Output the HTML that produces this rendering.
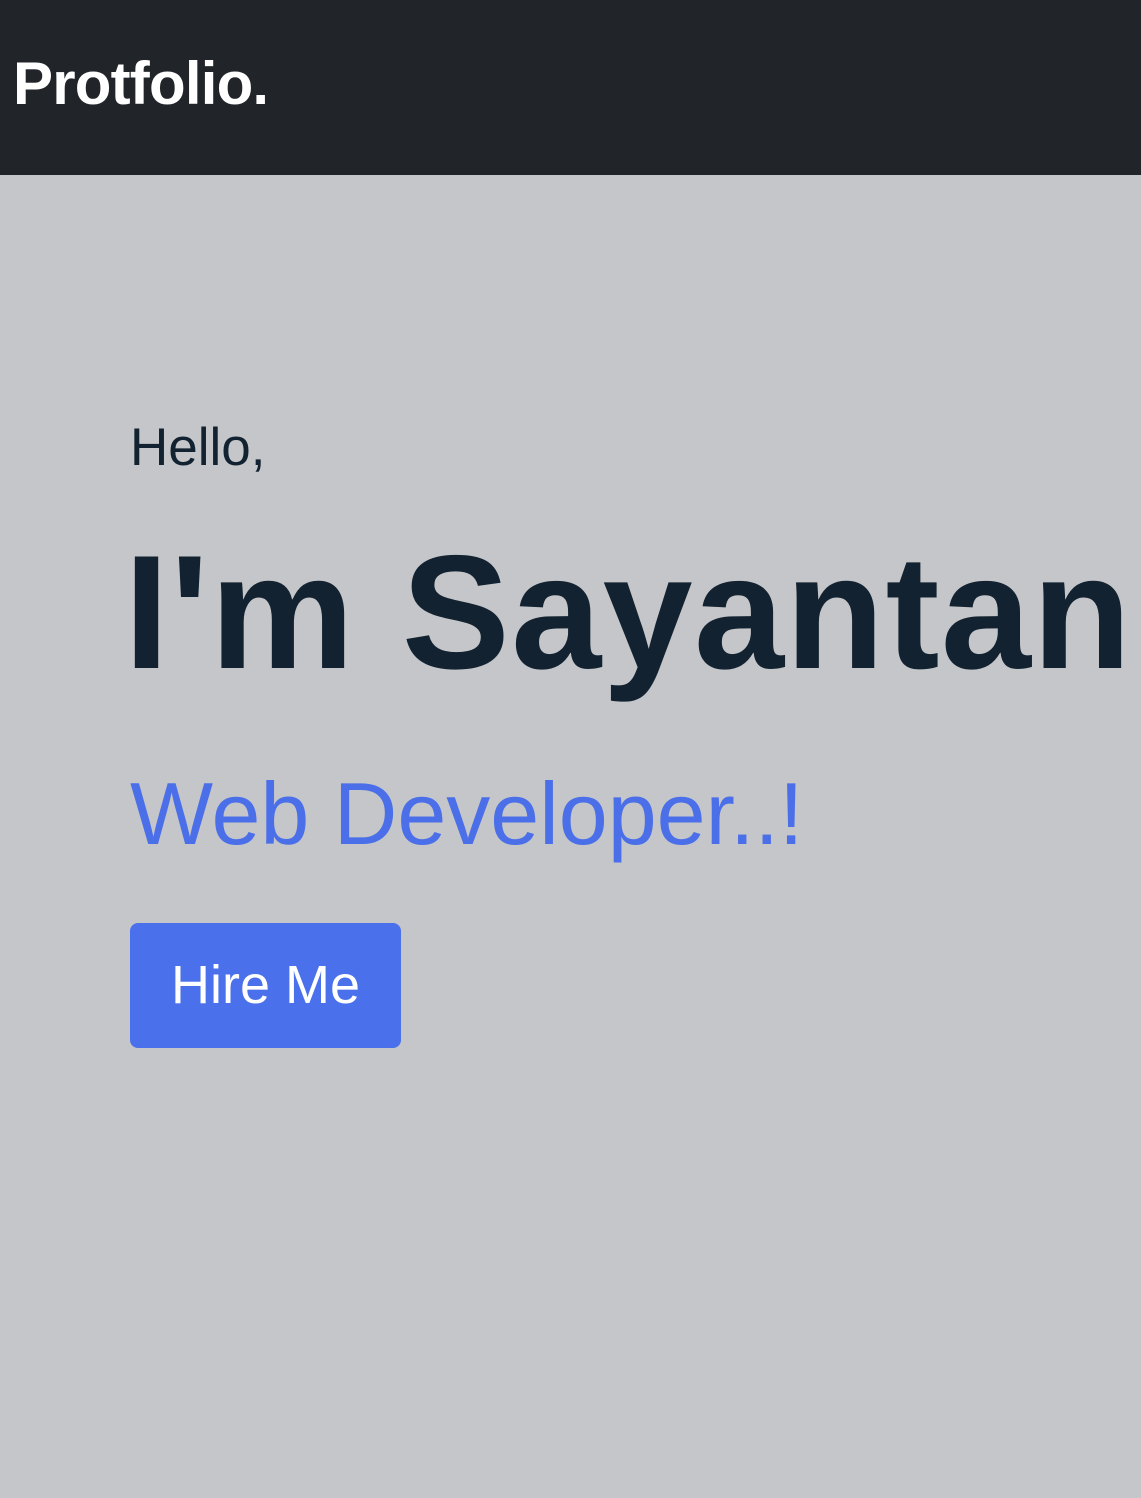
<!DOCTYPE html>
<html><head><meta charset="utf-8"><style>
html,body{margin:0;padding:0;}
body{width:1141px;height:1498px;background:#c5c6ca;font-family:"Liberation Sans",Arial,sans-serif;position:relative;overflow:hidden;}
.nav{position:absolute;left:0;top:0;width:1141px;height:175px;background:#212429;}
.logo{position:absolute;left:13px;top:50px;font-size:60px;font-weight:bold;color:#fff;line-height:68px;letter-spacing:-0.8px;}
.hello{position:absolute;left:130px;top:418px;font-size:53px;line-height:60px;color:#132230;}
.name{position:absolute;left:124px;top:518px;font-size:162px;font-weight:bold;line-height:190px;color:#132230;white-space:nowrap;letter-spacing:1.3px;}
.role{position:absolute;left:130px;top:759px;font-size:88px;line-height:110px;color:#4b6fe8;white-space:nowrap;}
.btn{position:absolute;left:130px;top:923px;width:271px;height:125px;background:#4a70ec;border-radius:8px;color:#fff;font-size:54px;line-height:125px;text-align:center;}
</style></head><body>
<div class="nav"><div class="logo">Protfolio.</div></div>
<div class="hello">Hello,</div>
<div class="name">I'm Sayantan</div>
<div class="role">Web Developer..!</div>
<div class="btn">Hire Me</div>
</body></html>
